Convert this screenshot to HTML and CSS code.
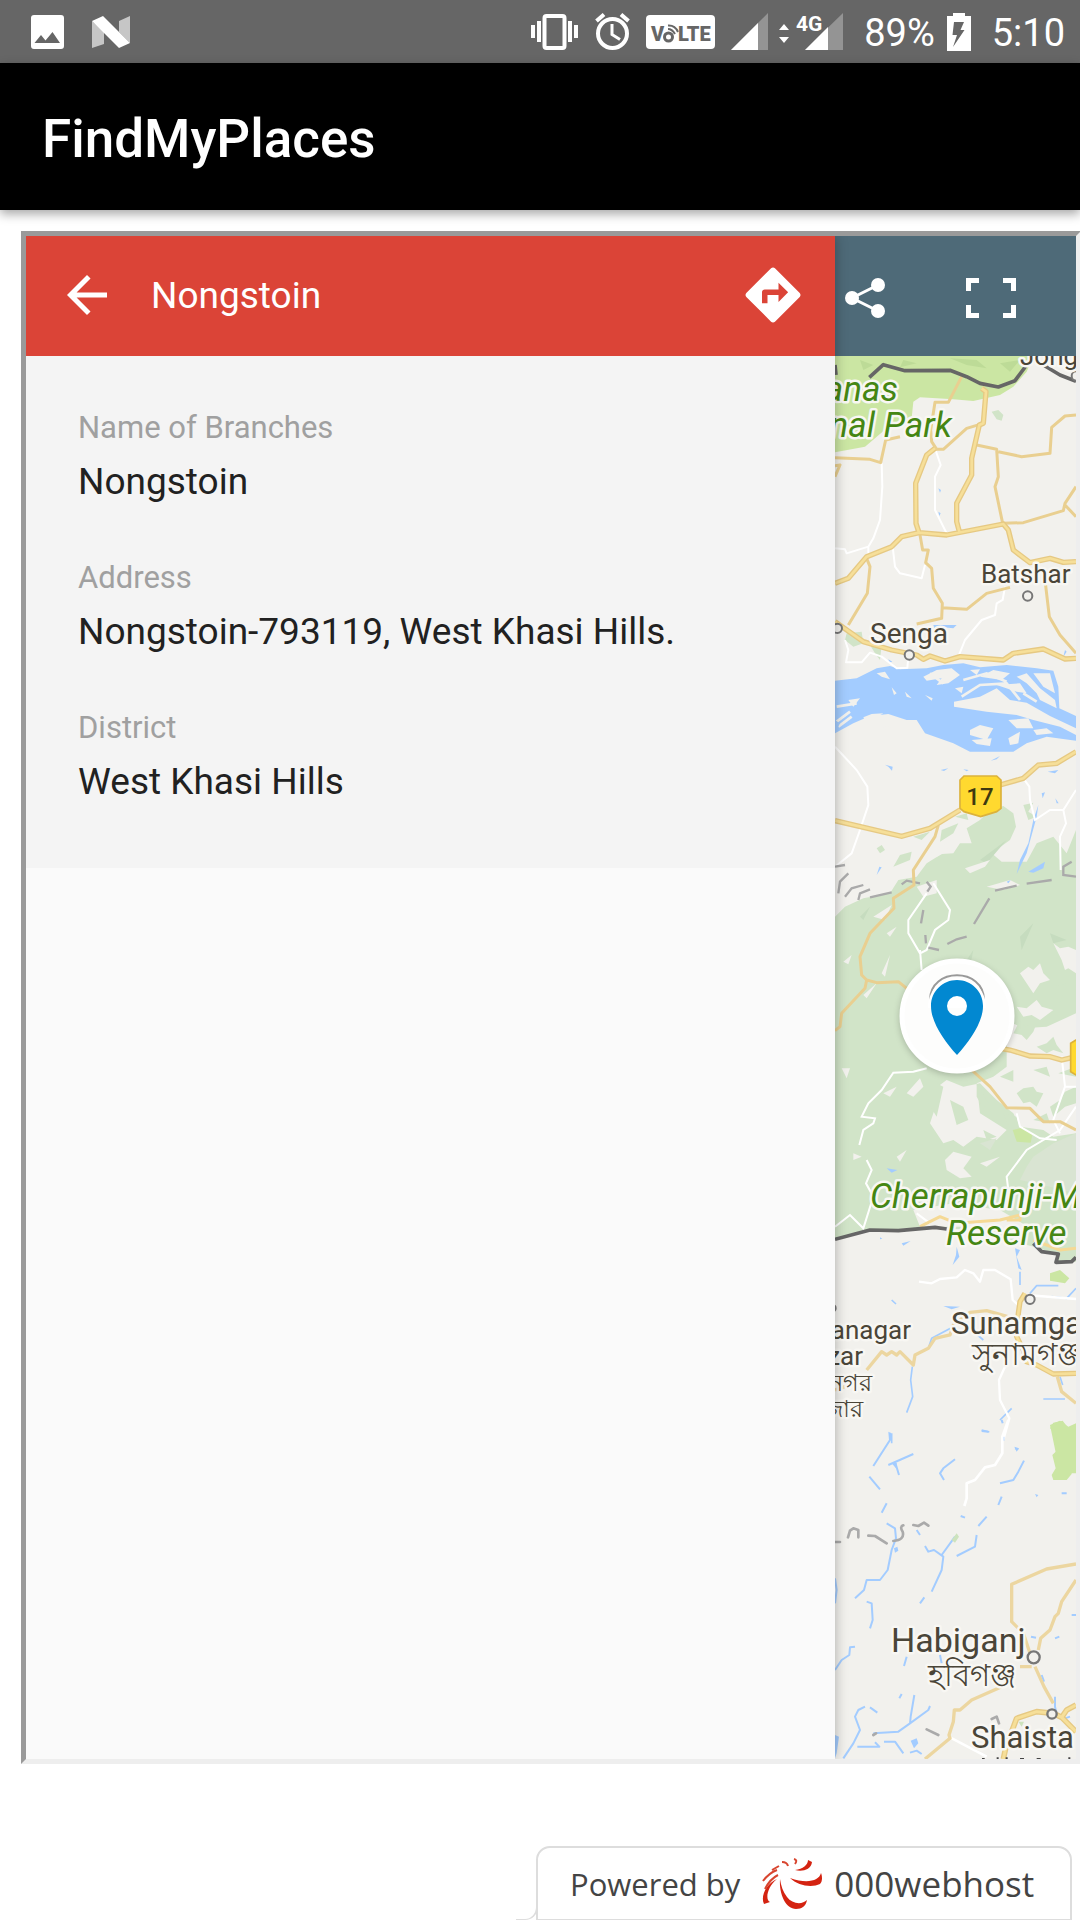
FILE: index.html
```html
<!DOCTYPE html>
<html lang="en">
<head>
<meta charset="utf-8">
<meta name="viewport" content="width=device-width, initial-scale=1">
<title>FindMyPlaces</title>
<link rel="stylesheet" href="styles.css">
</head>
<body>
<div class="status-bar">
  <div class="status-notes">
    <svg width="35" height="36" viewBox="0 0 35 36" aria-label="Screenshot"><path fill="#fff" fill-rule="evenodd" d="M4 1H31Q34 1 34 4V32Q34 35 31 35H4Q1 35 1 32V4Q1 1 4 1ZM4.500 29H30L22.500 18 15.500 26.500 11 21Z"/></svg>
    <svg width="40" height="34" viewBox="0 0 40 34" aria-label="Android Nougat"><path fill="#c6c6c6" d="M1 6L13 17V29L1 33ZM28 6L39 1V28L28 17Z"/><path fill="#fff" d="M1 6L12 1 39 28 28 33Z"/></svg>
  </div>
  <div class="status-icons">
    <svg width="48" height="36" viewBox="0 0 48 36" aria-label="Vibrate"><rect x="13.500" y="2" width="20" height="32" rx="2" fill="none" stroke="#fff" stroke-width="4"/><path fill="#fff" d="M0 11H4V24H0ZM6 7H10V28H6ZM37 7H41V28H37ZM43 11H47V24H43Z"/></svg>
    <svg width="35" height="37" viewBox="0 0 35 37" aria-label="Alarm"><g fill="none" stroke="#fff"><circle cx="17.500" cy="20.500" r="14.500" stroke-width="4"/><path stroke-width="4" d="M1.500 8L9 1.500M33.500 8L26 1.500"/><path stroke-width="3" d="M17 11V21.500L25 26.500"/></g></svg>
    <svg width="69" height="36" viewBox="0 0 69 36" aria-label="VoLTE"><rect y="1" width="69" height="34" rx="4" fill="#fff"/><text class="volte" x="5" y="27">V</text><circle cx="22.500" cy="23" r="4" fill="none" stroke="#666" stroke-width="3"/><path fill="none" stroke="#666" stroke-width="2" d="M22 15Q26 15 29 20M22 11.500Q29 11 32 18"/><text class="volte" x="32" y="27">LTE</text></svg>
    <svg width="112" height="38" viewBox="0 0 112 38" aria-label="4G signal"><path fill="#949494" d="M0 37L37 0V37ZM74 37L112 0V37Z"/><path fill="#fff" d="M0 37L27 10V37ZM74 37L97 14V37ZM48 17L53 11 58 17ZM48 24L53 30 58 24Z"/><text class="network" x="65" y="18">4G</text></svg>
  </div>
  <div class="status-battery">
    <span>89%</span>
    <svg width="24" height="38" viewBox="0 0 24 38" aria-label="Charging"><path fill="#fff" d="M0 3H6V0H18V3H24V38H0Z"/><path fill="#666" d="M7 9H17L13.500 17H17.500L6 34 10 22H5.500Z"/></svg>
  </div>
  <span>5:10</span>
</div>

<header class="app-bar"><h1>FindMyPlaces</h1></header>

<main class="viewer">
  <section class="panel">
    <div class="panel-header">
      <button class="icon-button" type="button" aria-label="Back"><svg width="60" height="60" viewBox="0 0 24 24"><path fill="#fff" d="M20 11H7.830l5.590-5.590L12 4l-8 8 8 8 1.410-1.410L7.830 13H20v-2z"/></svg></button>
      <h2>Nongstoin</h2>
      <button class="icon-button" type="button" aria-label="Directions"><svg width="66" height="66" viewBox="0 0 24 24"><path fill="#fff" d="M21.710 11.290l-9-9c-.39-.39-1.020-.39-1.410 0l-9 9c-.39.39-.39 1.020 0 1.410l9 9c.39.39 1.020.39 1.410 0l9-9c.39-.38.39-1.010 0-1.410zM14 14.500V12h-4v3H8v-4c0-.55.45-1 1-1h5V7.500l3.500 3.500-3.500 3.500z"/></svg></button>
    </div>
    <dl class="details">
      <div><dt>Name of Branches</dt><dd>Nongstoin</dd></div>
      <div><dt>Address</dt><dd>Nongstoin-793119, West Khasi Hills.</dd></div>
      <div><dt>District</dt><dd>West Khasi Hills</dd></div>
    </dl>
  </section>

  <section class="map">
    <div class="map-tools">
      <button class="icon-button" type="button" aria-label="Share"><svg width="40" height="40" viewBox="0 0 40 40"><path fill="none" stroke="#fff" stroke-width="3" d="M33 7L7 20 33 33"/><g fill="#fff"><circle cx="7" cy="20" r="7"/><circle cx="33" cy="7" r="7"/><circle cx="33" cy="33" r="7"/></g></svg></button>
      <button class="icon-button" type="button" aria-label="Full screen"><svg width="50" height="40" viewBox="0 0 50 40"><path fill="none" stroke="#fff" stroke-width="5" d="M2.500 13V2.500H13M37 2.500H47.500V13M47.500 27V37.500H37M13 37.500H2.500V27"/></svg></button>
    </div>
    <svg class="map-canvas" viewBox="835 356 241 1403" role="img" aria-label="Map of Meghalaya">
      <path fill="#f2f1ed" d="M835 356H1076V1759H835Z"/>

      <!-- parks and river, north -->
      <g transform="translate(820 340) scale(.33333)">
        <path fill="#cbe6a3" d="M45 48H640L620 95 580 140 540 165 460 183 400 178 300 172 280 185 275 235 200 265 165 295 135 320 45 337Z"/>
        <path fill="#bddb97" d="M120 60L160 75 130 90ZM250 60L290 70 240 82ZM390 55L470 60 500 85 440 75ZM540 70L600 60 570 95Z"/>
        <path fill="#d1e4c8" d="M515 215L535 210 550 225 545 242 530 238ZM80 880L125 875 130 910 100 920 75 900ZM150 915L185 915 180 960 165 940Z"/>
        <path fill="#a3ccff" d="M45 1022L110 1015 170 985 210 978 240 988 320 985 370 975 430 970 480 982 560 975 650 985 700 992 715 1040 718 1105 768 1128V1202L680 1190 620 1210 580 1235 450 1235 400 1210 315 1180 290 1140 260 1140 205 1122 150 1128 100 1150 45 1180Z"/>
        <path fill="#a3ccff" d="M340 855L410 855 400 865 370 862 345 870ZM355 445L363 450 360 458ZM355 515L362 520 358 528ZM735 930L740 935 730 950ZM205 958L217 965 208 968Z"/>
        <g fill="#f2f1ed">
          <path d="M402 1085L480 1070 530 1045 570 1080 620 1088 690 1128 768 1165V1185L720 1160 640 1140 590 1125 500 1115 402 1100Z"/>
          <path d="M170 1000L195 995 210 1018 185 1010ZM310 1010L350 990 395 985 420 1005 385 1030 350 1035 365 1015 320 1022ZM450 990L480 988 470 1005ZM480 1010L520 990 570 1000 545 1020ZM590 1010L620 1000 660 1045 705 1080 710 1105 660 1080 650 1060 620 1030ZM530 1035L600 1030 620 1060 590 1055ZM640 1000L690 1000 705 1060 670 1040ZM85 1080L120 1075 100 1100ZM215 1042L230 1060 222 1065ZM255 1055L275 1075 260 1070ZM315 1065L338 1075 335 1082ZM130 1132L155 1122 190 1120 140 1150ZM185 1155L215 1163 200 1172ZM450 1170L480 1155 520 1165 500 1200 450 1185ZM565 1140L625 1135 640 1165 590 1165ZM405 1045L430 1040 425 1060ZM640 1170L680 1165 700 1180 650 1185ZM455 1200L515 1195 510 1218 470 1212ZM565 1195L600 1175 595 1210 570 1215Z"/>
        </g>
        <path fill="none" stroke="#f2f1ed" stroke-width="8" d="M330 1000L370 1030M430 1020L500 1000 560 1025M425 1070L480 1035 560 1030 600 1080M610 1060L650 1085M50 1100L110 1090M90 1115L50 1145M55 1160L95 1130"/>
      </g>

      <!-- forest, centre -->
      <g transform="translate(820 720) scale(.33333)">
        <path fill="#a3ccff" d="M45 1L60 10 50 30ZM195 134L218 140 216 152 205 140ZM362 150L385 145 372 153ZM512 122L540 108 530 118ZM430 148L446 150 440 154ZM683 155L715 150 705 160ZM170 465L178 440 185 442Z"/>
        <path fill="#d1e4c8" d="M45 590L75 560 130 535 210 520 235 480 290 470 320 430 365 402 400 400 420 370 455 370 440 325 480 300 510 270 550 258 580 280 588 320 570 360 515 400 545 425 620 425 650 370 700 350 740 400 768 330V1650L700 1630 600 1570 430 1530 350 1520 150 1532 45 1558Z"/>
        <path fill="#d1e4c8" d="M170 385L185 375 195 390 180 400ZM365 330L415 310 400 340 360 365ZM405 290L440 280 445 300ZM610 255L640 248 625 275 650 290 625 300ZM240 405L275 395 270 420 220 440ZM280 350L330 335 305 360Z"/>
        <path fill="#c6dcbf" d="M480 420L560 360 500 430ZM600 650L640 610 605 690ZM120 590L150 560 130 600ZM690 640L740 660 700 670ZM440 720L460 690 450 740Z"/>
        <g fill="#f2f1ed">
          <path d="M160 590L215 555 195 600ZM70 725L95 705 85 733ZM185 760L210 705 195 770ZM130 825L170 790 140 835ZM200 640L230 620 210 650ZM330 400L420 345 370 400 350 410ZM435 445L510 420 495 440 450 460ZM500 500L570 480 600 495 550 510ZM290 500L350 480 350 520 310 530ZM700 670L720 685 745 680 768 690V760L745 745 735 750 725 720ZM600 760L625 740 640 750 660 730 670 760 690 780 660 790 640 820 620 790ZM590 860L620 865 650 840 665 860 700 870 680 885 660 900 635 885 610 890Z"/>
          <path d="M560 900L610 925 680 920 768 880V1240L700 1250 670 1230 600 1220 580 1180 530 1140 500 1110 480 1090 430 1100 380 1080 340 1110 350 1150 330 1210 370 1270 400 1260 430 1280 470 1250 530 1260 560 1230 480 1180 470 1090 520 1070 560 1040Z"/>
          <path d="M65 1045L90 1045 80 1075ZM260 1120L300 1075 310 1100 280 1130ZM190 1120L230 1100 210 1130ZM230 1310L260 1290 240 1325ZM375 1320L400 1295 455 1310 430 1345 455 1370 420 1375 380 1350ZM100 1300L125 1310 100 1320ZM280 1470L400 1450 540 1470 640 1530 560 1540 430 1520 300 1520ZM480 1330L540 1310 500 1340Z"/>
        </g>
        <g fill="#d1e4c8">
          <path d="M580 940L600 900 615 920 650 910 640 935 620 960 605 945ZM650 980L680 970 700 950 710 975 730 1000 700 990 680 1000ZM390 1140L430 1160 445 1200 410 1215ZM470 1090L505 1150 490 1165 470 1130ZM540 1070L580 1050 580 1085ZM590 1120L610 1105 640 1100 650 1115 670 1120 650 1160 630 1145 610 1150ZM690 1160L720 1140 735 1115 768 1100V1150L735 1160 700 1190ZM550 1180L590 1190 600 1230 560 1210ZM640 1200L680 1180 690 1210ZM700 800L740 790 720 850ZM640 1050L680 1040 690 1070ZM715 1060L768 1040V1070ZM330 1080L370 1100 350 1190 325 1150ZM490 1230L530 1250 500 1260Z"/>
        </g>
        <path fill="#d9e4d2" d="M640 1310L700 1270 768 1240V1420L690 1400 600 1380 620 1340ZM480 1270L530 1255 510 1290Z"/>
        <path fill="#cbe6a3" d="M578 1230L610 1222 637 1245 632 1268 590 1265Z"/>
        <path fill="#a3ccff" d="M640 300L655 255 650 290 620 400 590 462 600 420 625 370ZM625 455L675 425 670 445 640 458ZM560 485L572 480 565 490ZM665 220L675 217 668 235ZM706 235L716 250 710 250ZM200 1345L232 1350 215 1358Z"/>
        <g fill="none" stroke="#fff" stroke-width="6">
          <path d="M45 80L110 150 142 200 145 255 120 330 95 400 45 440M610 175L628 200 630 240 645 300 690 270 730 270 768 210M730 270L738 310 720 350 722 450M340 490L390 570 385 600 345 630 320 690 300 700 265 640 265 600 320 520M300 690L305 750M320 1045L280 1055 220 1058 185 1110 145 1150 125 1190 165 1195 160 1210 130 1230 118 1275M140 1320L155 1350 138 1390 160 1430 130 1525 90 1485 45 1520M725 1010L735 1100 700 1200 720 1240M735 1100L768 1100M768 1160L720 1230 620 1290 560 1370 565 1410M590 1180L600 1220 660 1255 710 1260M290 1480L330 1510"/>
        </g>
        <g fill="none" stroke="#aaa" stroke-width="7">
          <path d="M45 440L75 435M85 460L60 485 55 520M75 530L95 505 130 495M115 540L120 520 150 508M150 532L215 517M245 493L260 482 300 490M320 485L332 500 322 515M310 570L303 610M316 645L318 670M325 683L357 690M382 672L410 658 440 650M462 612L508 535M525 512L590 497M620 491L695 480M768 470L730 465 730 440 755 425"/>
        </g>
        <g fill="none" stroke="#e9cf90" stroke-width="9" stroke-linejoin="round">
          <path d="M355 315L345 350 280 450 282 495 220 535 222 565 150 640 120 710 125 765 140 780 135 805 65 880 60 920 45 932M140 780L170 788 235 785 260 805 280 850 305 920 400 940M455 1050L510 1100 560 1163 630 1165 670 1205 720 1205 768 1230"/>
          <path stroke="#f5d995" d="M300 1520L360 1490 410 1510 540 1500 600 1485 600 1500 560 1500M640 1560L720 1590 768 1585"/>
        </g>
        <path fill="none" stroke="#e6c983" stroke-width="16" d="M45 302L245 349 330 325 420 270M540 195L610 175 655 135 710 130 768 95M430 1020L510 980 570 990 630 1008 690 1010 725 1020 768 1010"/>
        <path fill="none" stroke="#f6df99" stroke-width="8" d="M45 302L245 349 330 325 420 270M540 195L610 175 655 135 710 130 768 95M430 1020L510 980 570 990 630 1008 690 1010 725 1020 768 1010"/>
        <path fill="#ffd92f" stroke="#dcb23c" stroke-width="5" d="M432 168H530L543 180V265L530 275 482 290 432 275 420 265V180ZM768 960L752 970V1055L768 1065H790V960Z"/>
      </g>

      <!-- roads, north -->
      <g transform="translate(820 340) scale(.33333)" fill="none" stroke-linejoin="round">
        <path stroke="#fff" stroke-width="6" d="M185 370L187 440 180 540 160 595 145 620 80 640 75 628 45 625M145 620V645M345 325L362 375 345 410 345 510 380 580M218 620L225 680 240 700 305 715 315 675M415 950L435 900 485 840 525 825 530 790 548 780 555 740M75 900L85 930 78 967 125 967 150 938 185 950 230 985 262 983 265 950"/>
        <path stroke="#e9cf90" stroke-width="9" d="M45 353L150 358 182 368 197 300 240 290M425 110L385 187 345 187 332 270 335 305 350 328 370 328 440 265 490 250M470 315L530 328 535 410 525 440 548 550 610 548 730 512 735 490 768 440M535 335L605 350 690 340 695 262 735 228 768 225M300 585L308 630 325 630 317 668 335 685 340 745 367 790 365 835 290 852M367 803L440 808 500 760 570 742M140 655L150 680 142 760 85 855M735 495L768 530M675 720L688 830 720 885 768 940M45 410L60 375 45 377"/>
        <path stroke="#e6c983" stroke-width="16" d="M485 145L498 155 490 250 478 255 455 355 455 405 410 490 410 545 418 575M345 325L320 345 287 430 288 550 297 578M45 730L85 715 140 650 215 620 245 590 297 578 380 585 550 552 565 570 580 630 630 668 690 655 730 667 768 665M45 845L130 905 215 930 290 945 310 958 330 948 375 963 420 950 550 960 580 940 670 927 735 957 768 955"/>
        <path stroke="#f6df99" stroke-width="8" d="M485 145L498 155 490 250 478 255 455 355 455 405 410 490 410 545 418 575M345 325L320 345 287 430 288 550 297 578M45 730L85 715 140 650 215 620 245 590 297 578 380 585 550 552 565 570 580 630 630 668 690 655 730 667 768 665M45 845L130 905 215 930 290 945 310 958 330 948 375 963 420 950 550 960 580 940 670 927 735 957 768 955"/>
        <path stroke="#666" stroke-width="11" d="M148 112L190 74 255 92 390 91 440 110 480 130 535 141 585 122 620 75M670 75L720 105 768 124M45 75L48 105"/>
        <path fill="#f2f1ed" stroke="#777" stroke-width="6" d="M609 768A14 14 0 1 0 637 768 14 14 0 1 0 609 768M254 945A14 14 0 1 0 282 945 14 14 0 1 0 254 945M38 865A14 14 0 1 0 66 865 14 14 0 1 0 38 865M755 108A14 14 0 1 0 783 108 14 14 0 1 0 755 108"/>
      </g>

      <!-- plains, upper south -->
      <g transform="translate(820 1080) scale(.33333)" fill="none" stroke-linejoin="round">
        <path fill="#f2f1ed" d="M45 478L150 452 235 452 345 442 430 450 600 490 660 505 710 525 710 547 768 545V620H45Z"/>
        <path stroke="#666" stroke-width="11" d="M45 478L150 450 235 452 345 442 380 447M640 490L665 515 715 522 708 547 755 545 768 532"/>
        <path fill="#cbe6a3" d="M690 580L720 570 748 595 735 610 690 602ZM690 1035L720 1022 745 1040 768 1030V1180H720Z"/>
        <path fill="#a3ccff" d="M410 500L418 530 398 555 408 525ZM585 505L600 510 590 530 605 570 595 565ZM155 420L170 425ZM180 472L187 476 180 478ZM245 490L272 483 250 497ZM195 528L210 530ZM110 640L125 635ZM180 695L195 697ZM370 678L420 680 395 688ZM290 713L303 713ZM205 1055L213 1060 215 1080H207ZM655 995L663 1015Z"/>
        <path stroke="#a3ccff" stroke-width="5" d="M600 575V615M630 640L650 617H715M695 650L740 655 768 625M325 805L335 775 400 740M277 860L272 900 278 950 260 998M670 957H735M720 890L728 915M485 1050L508 1056M215 1060V1090M455 750L490 780M540 1020L575 985M215 660L228 672"/>
        <path stroke="#fff" stroke-width="7" d="M297 605L335 610 360 597 410 592 435 570 460 580 480 605 490 570 525 570 572 598 578 660 600 680M620 645L768 657M555 860L537 900 540 960 568 1015 550 1080"/>
        <path stroke="#ecd6a0" stroke-width="10" d="M140 870L185 815 200 825 215 815 230 825 240 815 280 855 285 825 325 805 345 775 390 765 400 735 450 697 500 692 600 720M712 890L725 935 768 970M45 930L75 920"/>
        <path stroke="#e6c983" stroke-width="16" d="M615 640L600 665 595 700 590 770 610 810 620 845 650 855 700 882 768 880"/>
        <path stroke="#f6df99" stroke-width="8" d="M615 640L600 665 595 700 590 770 610 810 620 845 650 855 700 882 768 880"/>
        <circle cx="630" cy="658" r="14" fill="#f2f1ed" stroke="#777" stroke-width="6"/>
        <circle cx="38" cy="685" r="9" fill="#f2f1ed" stroke="#777" stroke-width="6"/>
      </g>

      <!-- plains, lower south -->
      <g transform="translate(820 1420) scale(.33333)" fill="none" stroke-linejoin="round">
        <path fill="#cbe6a3" d="M690 25L700 8 728 2 745 25 768 18V135L755 150V162L740 180H700L695 165 707 145 697 105 718 85 710 60 712 40Z"/>
        <path stroke="#a3ccff" stroke-width="6" d="M210 38V60L160 138M148 170L180 208M200 250L185 278M200 310L225 325 228 355 215 390 203 450 180 480H140L132 510 105 535M140 545L155 550 158 600 150 625M205 135L280 102M225 125L237 165M405 118L370 145 360 160 372 180M500 290L475 318M470 345L465 380 410 408M405 350L365 405M315 378L325 395 342 390 370 410 365 450 335 515M313 532L300 550M540 190L580 180 595 155 612 122M535 255L545 230M485 33L505 35M585 85L595 88M725 220H740M105 680L90 682 88 705 65 720 45 750M45 475L50 510 45 550M70 1015L100 970 120 930 105 890 115 870 135 860M150 862L172 878M160 940L235 935 270 910 325 870 330 858M283 825L272 890 270 912M112 980H178L165 967M192 965H225L250 1000M270 998L290 992 305 1002M260 710L252 738M245 822L238 835M360 705L365 730M422 288L435 293M290 330L300 345M550 50V62M545 0L548 10M705 655L718 650M633 650L648 653M665 765L672 785M755 585H768M705 830V860L712 890M735 895L750 890"/>
        <path fill="#a3ccff" d="M272 962L290 955 295 970 282 985ZM222 385L232 380 235 392 225 398ZM215 130L230 128 228 145ZM45 945L57 950 50 1000 45 1015ZM583 80L597 85 590 95ZM645 222L655 225 650 232Z"/>
        <path fill="#cde3bd" d="M395 360L410 340 417 350 405 368ZM595 905L612 905 605 920Z"/>
        <path stroke="#fff" stroke-width="8" d="M565 0L547 50V100L525 135 495 142 465 180 440 190 440 235 433 258M390 952L500 1010"/>
        <path stroke="#aaa" stroke-width="8" stroke-linecap="round" d="M45 366H60M84 352L90 332 100 325 115 330V352M145 347L165 348 200 370M220 363Q255 360 248 335 238 320 250 316M280 315L295 318 312 308 325 317M320 928L355 945M160 945L168 940M515 897L530 890 537 910"/>
        <path stroke="#ecd6a0" stroke-width="10" d="M768 432L680 447 575 493V605L610 640 635 715M768 480L725 545 715 580 705 590 690 630 662 655 655 690M635 740L600 740M545 800L455 840 420 870H403L400 905 387 945 390 955 315 1017M645 740L672 800 700 850"/>
        <path stroke="#e6c983" stroke-width="17" d="M550 1017L558 980 590 895 650 875 700 880 725 892 768 935M725 892L740 870 768 855"/>
        <path stroke="#f6df99" stroke-width="9" d="M550 1017L558 980 590 895 650 875 700 880 725 892 768 935M725 892L740 870 768 855"/>
        <path fill="#f2f1ed" stroke="#777" stroke-width="7" d="M623 712A18 18 0 1 0 659 712 18 18 0 1 0 623 712M682 882A14 14 0 1 0 710 882 14 14 0 1 0 682 882"/>
        <path stroke="#444" stroke-width="6" d="M486 1017H494M533 1012V1020M560 1012V1020M600 1017H612M650 1017H662M748 1012V1020"/>
      </g>

      <g class="place">
        <text class="t26" x="1020" y="365">Jong</text>
        <text class="t26" x="981" y="583">Batshar</text>
        <text class="t28" x="870" y="643">Senga</text>
        <text class="t26 end" x="911" y="1339">anagar</text>
        <text class="t26 end" x="863" y="1365">zar</text>
        <text class="t24 end" x="872" y="1391">নগর</text>
        <text class="t24 end" x="863" y="1417">জার</text>
        <text class="t31" x="951" y="1334">Sunamga</text>
        <text class="t31" x="972" y="1365">সুনামগঞ্জ</text>
        <text class="t34" x="891" y="1652">Habiganj</text>
        <text class="t31" x="928" y="1686">হবিগঞ্জ</text>
        <text class="t31" x="971" y="1748">Shaista</text>
      </g>
      <g class="park">
        <text class="t35 end" x="898" y="401">anas</text>
        <text class="t35 end" x="952" y="437">nal Park</text>
        <text class="t35" x="870" y="1208">Cherrapunji-M</text>
        <text class="t35" x="946" y="1245">Reserve</text>
      </g>
      <text class="route" x="980" y="805">17</text>

      <!-- selected place -->
      <circle class="pin-halo" cx="957" cy="1016" r="55" fill="#fdfdfc" stroke="#fff" stroke-width="5"/>
      <path fill="none" stroke="#999" stroke-width="2" d="M930 1000C930 967 984 967 984 1000"/>
      <path fill="#fff" d="M928 1008C928 968 986 968 986 1008Z"/>
      <path fill="#0288d1" fill-rule="evenodd" d="M957 980C971 980 983 991 983 1006 983 1022 970 1041 957 1055 944 1041 931 1022 931 1006 931 991 943 980 957 980ZM957 996A10 10 0 1 0 957 1016 10 10 0 1 0 957 996Z"/>
    </svg>
  </section>
</main>

<footer class="page-footer">
  <a class="host-badge" href="#">
    <span>Powered by</span>
    <svg width="60" height="52" viewBox="0 0 60 52" aria-hidden="true"><g fill="#d42311"><path d="M18 21C17 37 24 51 34 51 40 51 44 48 45 42 40 47 30 46 25 39 21 34 19 28 18 21Z"/><path d="M28 20C36 28 50 30 58 26 61 23 60 17 59 15 57 23 45 26 28 20Z"/><path d="M33 12C40 14 49 12 50 4L46 2C46 7 41 11 33 12Z"/><path d="M15 21C5 25-2 38 2 46L8 44C3 42 5 29 15 21Z"/></g><path fill="none" stroke="#d8452f" stroke-width="2" d="M1 23Q7 15 15 12M3 31Q8 21 16 17M10 12L17 8M20 4Q25 4 26 8M32 1Q36 2 33 6"/></svg>
    <span class="host-name">000webhost</span>
  </a>
</footer>
</body>
</html>
```
FILE: styles.css
```css
* { box-sizing: border-box; }

body {
  margin: 0;
  min-height: 100vh;
  display: flex;
  flex-direction: column;
  overflow-x: hidden;
  background: #fff;
  font-family: Roboto, "Noto Sans", sans-serif;
}

h1, h2, dl, dd { margin: 0; font-weight: 400; }
svg { display: block; }

.icon-button {
  padding: 0;
  border: 0;
  background: none;
  cursor: pointer;
}

.status-bar {
  display: flex;
  align-items: center;
  gap: 21px;
  height: 63px;
  padding: 0 15px 0 30px;
  background: #666;
  color: #fff;
  font-size: 38px;
}
.status-bar span { padding-top: 2px; }
.status-notes { display: flex; align-items: center; gap: 26px; margin-right: auto; }
.status-icons { display: flex; align-items: center; gap: 16px; }
.status-battery { display: flex; align-items: center; gap: 12px; }
.volte { fill: #666; font-size: 20px; font-weight: 900; }
.network { fill: #fff; font-size: 21px; font-weight: 700; }

.app-bar {
  position: relative;
  display: flex;
  align-items: center;
  height: 147px;
  padding: 4px 42px 0;
  background: #000;
  color: #fff;
  box-shadow: 0 4px 10px rgba(0, 0, 0, .35);
}
.app-bar h1 { font-size: 53px; font-weight: 500; }

.viewer {
  display: grid;
  grid-template-columns: minmax(0, 1fr) 241px;
  margin: 21px -1px 0 21px;
  border: 5px solid;
  border-color: #9a9a9a #eee #eee #9a9a9a;
}

.panel {
  position: relative;
  z-index: 1;
  background: #fafafa;
  box-shadow: 0 0 12px rgba(0, 0, 0, .3);
  clip-path: inset(0 -20px 0 0);
}
.panel-header {
  display: flex;
  align-items: center;
  height: 120px;
  padding: 0 29px 2px 31px;
  background: #db4437;
  color: #fff;
}
.panel-header h2 { flex: 1; padding-left: 34px; font-size: 37px; }

.details {
  display: flex;
  flex-direction: column;
  gap: 42px;
  height: 512px;
  padding: 47px 52px;
  background: #f4f4f4;
}
.details dt { color: #a0a0a0; font-size: 31px; line-height: 50px; }
.details dd { color: #212121; font-size: 37px; line-height: 58px; }

.map-tools {
  display: flex;
  align-items: center;
  gap: 81px;
  height: 120px;
  padding: 4px 10px 0;
  background: #4e6a78;
}
.map { min-width: 0; }
.map-canvas { width: 100%; height: auto; }
.place, .park { paint-order: stroke; stroke: #f8f7f3; stroke-width: 5px; stroke-linejoin: round; }
.place { fill: #4a4538; }
.park { fill: #458613; font-style: italic; }
.route { fill: #3e3a10; font-size: 24px; font-weight: 500; text-anchor: middle; }
.t24 { font-size: 24px; }
.t26 { font-size: 26px; }
.t28 { font-size: 28px; }
.t31 { font-size: 31px; }
.t34 { font-size: 34px; }
.t35 { font-size: 35px; }
.end { text-anchor: end; }
.pin-halo { filter: drop-shadow(0 2px 3px rgba(0, 0, 0, .2)); }

.page-footer {
  display: flex;
  justify-content: flex-end;
  margin-top: auto;
  padding-right: 8px;
}
.host-badge {
  position: relative;
  display: flex;
  align-items: center;
  width: 536px;
  height: 74px;
  padding: 0 0 0 32px;
  border: 2px solid #ddd;
  border-bottom-width: 1px;
  border-radius: 14px 14px 0 0;
  color: #444;
  font-family: "Open Sans", "Noto Sans", sans-serif;
  font-size: 31px;
  text-decoration: none;
  white-space: nowrap;
}
.host-badge svg { margin: 0 12px 0 22px; }
.host-name { font-size: 35px; }
.host-badge::before {
  content: "";
  position: absolute;
  right: 100%;
  bottom: -1px;
  width: 20px;
  height: 12px;
  border: solid #ddd;
  border-width: 0 2px 1px 0;
  border-bottom-right-radius: 16px;
}
```
